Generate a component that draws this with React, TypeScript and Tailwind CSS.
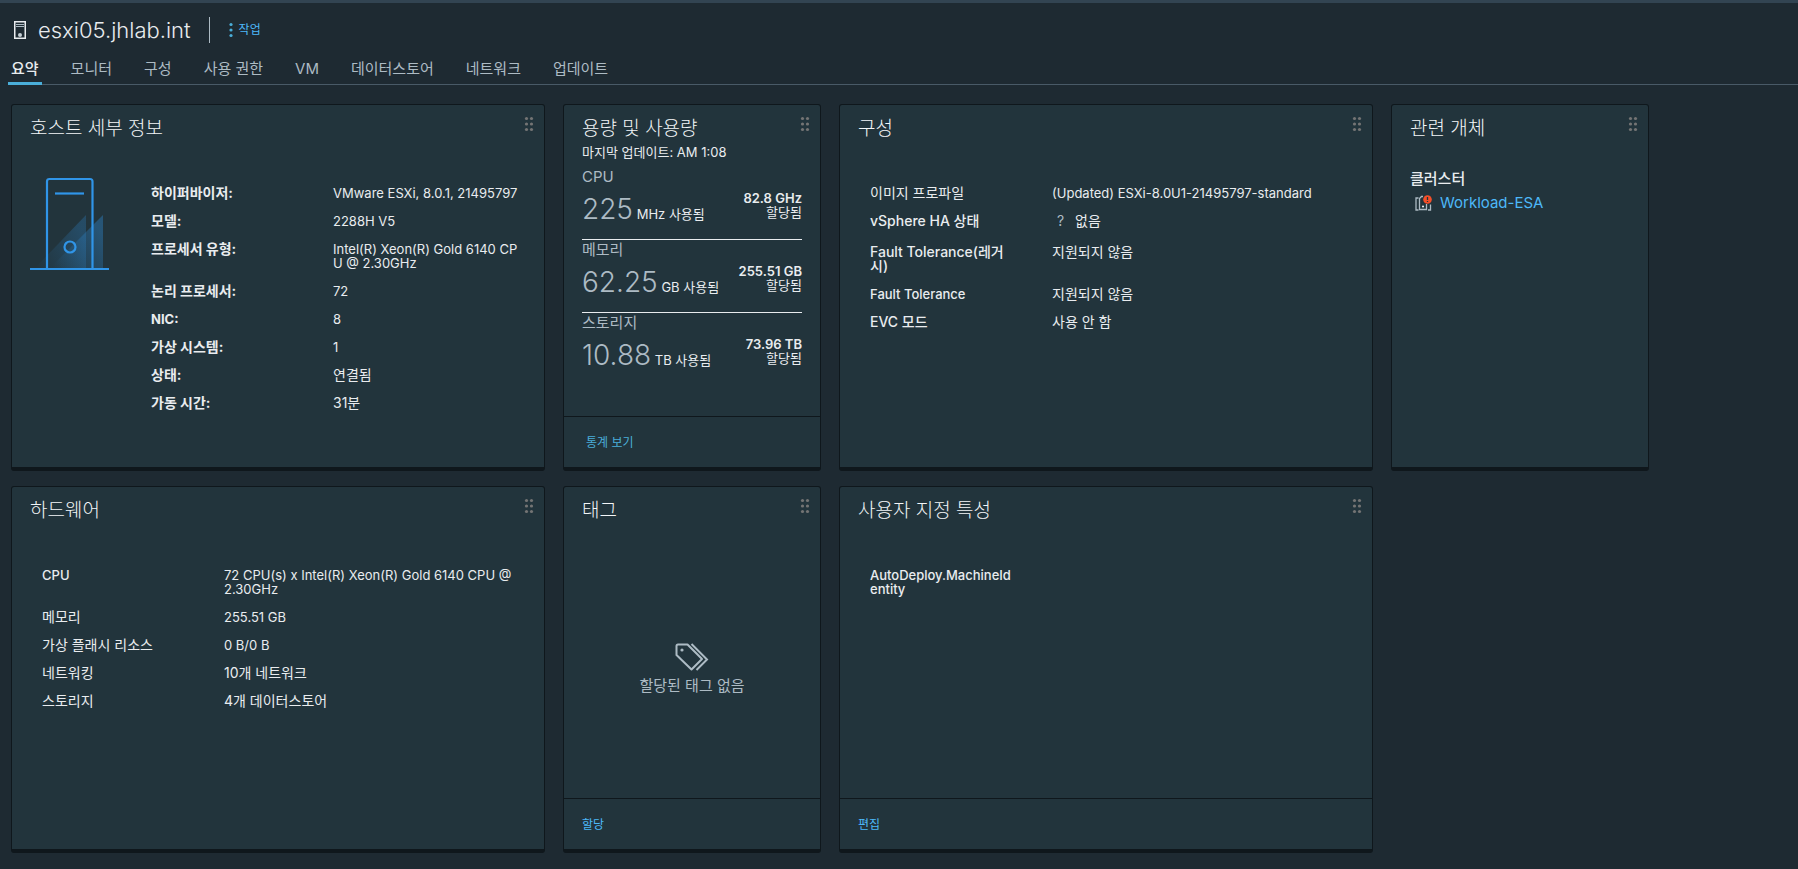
import type { ReactNode } from "react";

const tabs = ["요약", "모니터", "구성", "사용 권한", "VM", "데이터스토어", "네트워크", "업데이트"];

const hostDetails = [
  ["하이퍼바이저:", "VMware ESXi, 8.0.1, 21495797"],
  ["모델:", "2288H V5"],
  ["프로세서 유형:", "Intel(R) Xeon(R) Gold 6140 CPU @ 2.30GHz"],
  ["논리 프로세서:", "72"],
  ["NIC:", "8"],
  ["가상 시스템:", "1"],
  ["상태:", "연결됨"],
  ["가동 시간:", "31분"],
];

const usage = [
  { label: "CPU", value: "225", unit: "MHz 사용됨", total: "82.8 GHz" },
  { label: "메모리", value: "62.25", unit: "GB 사용됨", total: "255.51 GB" },
  { label: "스토리지", value: "10.88", unit: "TB 사용됨", total: "73.96 TB" },
];

const hardware = [
  ["CPU", "72 CPU(s) x Intel(R) Xeon(R) Gold 6140 CPU @ 2.30GHz"],
  ["메모리", "255.51 GB"],
  ["가상 플래시 리소스", "0 B/0 B"],
  ["네트워킹", "10개 네트워크"],
  ["스토리지", "4개 데이터스토어"],
];

const HostIcon = () => (
  <svg width="12" height="18" viewBox="0 0 12 18" fill="none" aria-hidden="true">
    <rect x="0.75" y="0.75" width="10.5" height="16.5" stroke="#e9ecef" strokeWidth="1.5" />
    <path d="M2 3.5h8M2 5.5h8" stroke="#adbbc4" strokeWidth="1" />
    <circle cx="6" cy="14" r="2" fill="#c5ced4" />
  </svg>
);

const DragIcon = () => (
  <svg width="10" height="16" viewBox="0 0 10 16" fill="#747474" aria-hidden="true">
    <circle cx="2.5" cy="2.5" r="1.6" />
    <circle cx="7.5" cy="2.5" r="1.6" />
    <circle cx="2.5" cy="8" r="1.6" />
    <circle cx="7.5" cy="8" r="1.6" />
    <circle cx="2.5" cy="13.5" r="1.6" />
    <circle cx="7.5" cy="13.5" r="1.6" />
  </svg>
);

const ServerArt = () => (
  <svg className="shrink-0" width="80" height="96" viewBox="0 0 80 96" fill="none" aria-hidden="true">
    <defs>
      <linearGradient id="fadeBack" x1="5" y1="92" x2="56" y2="66" gradientUnits="userSpaceOnUse">
        <stop stopColor="#3095e8" stopOpacity="0" />
        <stop offset="1" stopColor="#3095e8" stopOpacity="0.24" />
      </linearGradient>
      <linearGradient id="fadeFront" x1="24" y1="92" x2="73" y2="60" gradientUnits="userSpaceOnUse">
        <stop stopColor="#3095e8" stopOpacity="0" />
        <stop offset="1" stopColor="#3095e8" stopOpacity="0.34" />
      </linearGradient>
    </defs>
    <path d="M5 92L56 39V92Z" fill="url(#fadeBack)" />
    <path d="M20 92L73 39V92Z" fill="url(#fadeFront)" />
    <path d="M17 93V5.5Q17 3 19.5 3H60Q62.500 3 62.500 5.500V93" stroke="#3095e8" strokeWidth="2.200" />
    <path d="M25 17.5H54" stroke="#3095e8" strokeWidth="2.200" />
    <circle cx="40" cy="71" r="5.5" stroke="#3095e8" strokeWidth="2.200" />
    <path d="M0 93H79" stroke="#3095e8" strokeWidth="2.200" />
  </svg>
);

const ClusterIcon = () => (
  <svg width="17" height="16" viewBox="0 0 17 16" fill="none" aria-hidden="true">
    <path d="M3.5 3H1V15H3.5" stroke="#adbbc4" strokeWidth="1.3" />
    <path d="M8 1.5H6.5L4.5 3.500V14.500H11.500V9" stroke="#adbbc4" strokeWidth="1.300" />
    <path d="M13 15H15.500V9.500" stroke="#adbbc4" strokeWidth="1.300" />
    <circle cx="8" cy="11.500" r="1.100" fill="#e9ecef" />
    <circle cx="12.500" cy="4.500" r="4.300" fill="#f54f29" />
    <path d="M12.500 2V5M12.500 6V7" stroke="#22343c" strokeWidth="1.300" />
  </svg>
);

const TagsIcon = () => (
  <svg width="34" height="28" viewBox="0 0 34 28" fill="none" stroke="#adbbc4" strokeWidth="2" aria-hidden="true">
    <path d="M3 1.500H12.500L27 16L16.500 26.500L1.500 12V3Q1.500 1.500 3 1.500Z" strokeLinejoin="round" />
    <path d="M16.500 1L32 16.500L21.500 27" />
    <circle cx="7" cy="7" r="1.600" fill="#adbbc4" stroke="none" />
  </svg>
);

type CardProps = {
  title: string;
  wide?: boolean;
  footer?: ReactNode;
  children?: ReactNode;
};

const Card = ({ title, wide, footer, children }: CardProps) => (
  <section
    className={`flex flex-col rounded-[3px] border border-b-4 border-[#0f171c] bg-[#22343c] ${wide ? "col-span-2" : ""}`}
  >
    <header className="flex items-start justify-between pl-[18px] pr-[10px] pt-[11px]">
      <h2 className="pt-px text-[19px] leading-6 font-light text-[#f3f6f8]">{title}</h2>
      <button type="button" aria-label="이동" className="cursor-move">
        <DragIcon />
      </button>
    </header>
    <div className="flex flex-1 flex-col px-[18px]">{children}</div>
    {footer && <footer className="flex h-[51px] items-center border-t border-[#0f171c] px-[18px] pt-px">{footer}</footer>}
  </section>
);

// Hangul is set one step larger than Latin so both look the same size
const hangul = /[가-힣]/;
const textSize = (node: ReactNode) => (typeof node === "string" && !hangul.test(node) ? "" : "text-sm leading-[14px]");

type RowProps = {
  label: string;
  bold?: boolean;
  breakAll?: boolean;
  children?: ReactNode;
};

const Row = ({ label, bold, breakAll, children }: RowProps) => {
  const weight = bold ? "font-bold" : /^[A-Za-z]/.test(label) ? "font-medium" : "";
  return (
    <div className="flex py-[7px]">
      <dt className={`w-[182px] shrink-0 pr-9 break-all ${weight} ${textSize(label)}`}>{label}</dt>
      <dd className={`flex-1 ${breakAll ? "break-all" : ""} ${textSize(children)}`}>{children}</dd>
    </div>
  );
};

const App = () => {
  return (
    <div className="min-h-screen border-t-3 border-[#324452] bg-[#1e2a32] font-[Inter,'Noto_Sans_CJK_KR',sans-serif] text-[13px] leading-[14px] text-[#e9ecef]">
      <header className="flex items-center pt-[13px] pl-[14px]">
        <HostIcon />
        <h1 className="pl-3 text-[22px] leading-7 font-light">esxi05.jhlab.int</h1>
        <span className="ml-[18px] h-[26px] w-px bg-[#adbbc4]" />
        <button type="button" className="ml-[19px] flex items-center gap-[6px] text-xs text-[#4db8f8]">
          <svg width="4" height="16" viewBox="0 0 4 16" fill="#4aaed9" aria-hidden="true">
            <circle cx="2" cy="2.5" r="1.6" />
            <circle cx="2" cy="8" r="1.6" />
            <circle cx="2" cy="13.5" r="1.6" />
          </svg>
          작업
        </button>
      </header>

      <nav className="ml-2 flex gap-[26px] border-b border-[#495a67] pt-[13px] text-[#adbbc4]">
        {tabs.map((tab, i) => (
          <button
            key={tab}
            type="button"
            className={`-mb-px border-b-3 px-[3px] pt-[3px] pb-1 text-[15px] leading-[18px] ${
              i === 0 ? "border-[#4aaed9] font-medium text-[#e9ecef]" : "border-transparent"
            }`}
          >
            {tab}
          </button>
        ))}
      </nav>

      <main className="grid auto-rows-[minmax(367px,auto)] grid-cols-[repeat(auto-fill,258px)] gap-x-[18px] gap-y-[15px] px-[11px] pt-[19px] pb-4">
        <Card title="호스트 세부 정보" wide>
          <div className="flex gap-[41px] pt-[35px]">
            <ServerArt />
            <dl className="flex-1 pt-[3px]">
              {hostDetails.map(([label, value]) => (
                <Row key={label} label={label} bold breakAll>
                  {value}
                </Row>
              ))}
            </dl>
          </div>
        </Card>

        <Card
          title="용량 및 사용량"
          footer={
            <a href="#stats" className="pl-1 text-xs text-[#4aaed9]">
              통계 보기
            </a>
          }
        >
          <p className="pt-1">마지막 업데이트: AM 1:08</p>
          <div className="divide-y divide-[#e9ecef] pt-2">
            {usage.map((item) => (
              <div key={item.label} className="h-[73px]">
                <p className="text-[15px] leading-5 text-[#adbbc4]">{item.label}</p>
                <div className="flex items-start justify-between">
                  <p className="pt-2 leading-7">
                    <span className="text-[28px] font-light text-[#adbbc4]">{item.value}</span> {item.unit}
                  </p>
                  <p className="pt-1 text-right">
                    <b className="font-semibold">{item.total}</b>
                    <br />
                    할당됨
                  </p>
                </div>
              </div>
            ))}
          </div>
        </Card>

        <Card title="구성" wide>
          <dl className="px-3 pt-[38px]">
            <Row label="이미지 프로파일">(Updated) ESXi-8.0U1-21495797-standard</Row>
            <Row label="vSphere HA 상태">
              <span className="flex items-center pb-[3px]">
                <span className="w-[23px] pl-[5px] text-[#adbbc4]">?</span>
                없음
              </span>
            </Row>
            <Row label="Fault Tolerance(레거시)">지원되지 않음</Row>
            <Row label="Fault Tolerance">지원되지 않음</Row>
            <Row label="EVC 모드">사용 안 함</Row>
          </dl>
        </Card>

        <Card title="관련 개체">
          <h3 className="pt-[29px] text-[15px] leading-[18px] font-medium">클러스터</h3>
          <div className="flex items-center gap-2 pt-[6px] pl-[5px]">
            <ClusterIcon />
            <a href="#cluster" className="text-[15px] leading-[18px] text-[#4db8f8]">
              Workload-ESA
            </a>
          </div>
        </Card>

        <Card title="하드웨어" wide>
          <dl className="px-3 pt-[38px]">
            {hardware.map(([label, value]) => (
              <Row key={label} label={label}>
                {value}
              </Row>
            ))}
          </dl>
        </Card>

        <Card
          title="태그"
          footer={
            <button type="button" className="text-xs text-[#4db8f8]">
              할당
            </button>
          }
        >
          <div className="flex flex-1 flex-col items-center justify-center gap-[6px] pt-4 text-[15px] leading-[18px] text-[#adbbc4]">
            <TagsIcon />
            <p>할당된 태그 없음</p>
          </div>
        </Card>

        <Card
          title="사용자 지정 특성"
          wide
          footer={
            <button type="button" className="text-xs text-[#4db8f8]">
              편집
            </button>
          }
        >
          <dl className="px-3 pt-[38px]">
            <Row label="AutoDeploy.MachineIdentity" />
          </dl>
        </Card>
      </main>
    </div>
  );
};

export default App;
